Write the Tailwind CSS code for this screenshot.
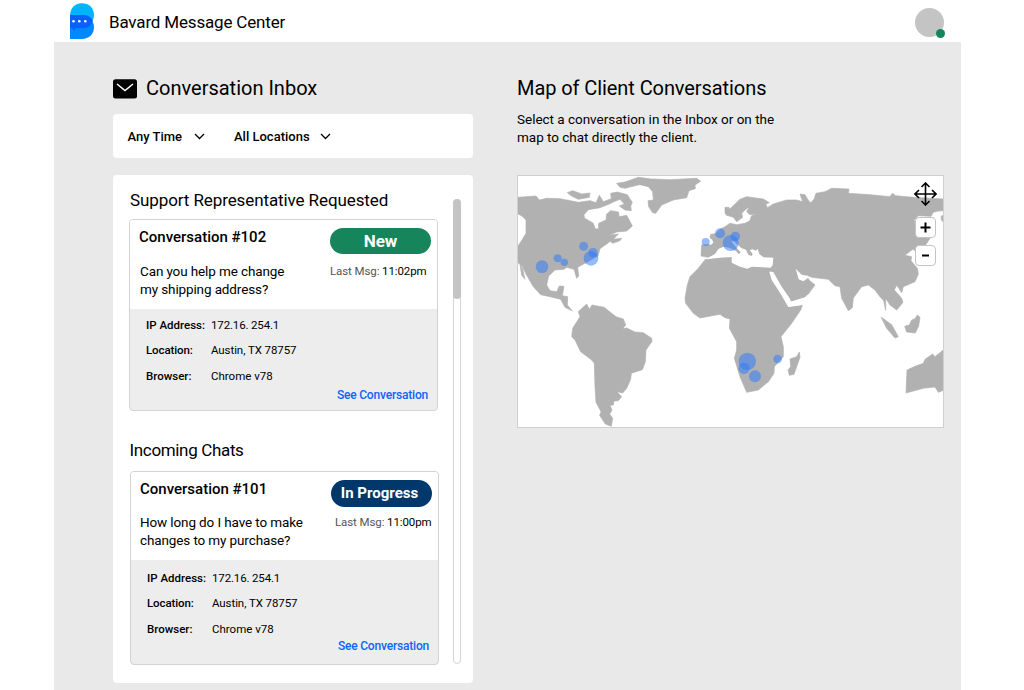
<!DOCTYPE html>
<html lang="en">
<head>
<meta charset="utf-8">
<title>Bavard Message Center</title>
<script src="https://cdn.jsdelivr.net/npm/@tailwindcss/browser@4"></script>
</head>
<body class="bg-white font-['Roboto',sans-serif] text-black h-[690px] w-[1024px] overflow-hidden">
<header class="h-[42px] flex pl-[70px]">
  <svg class="mt-[3px] w-6 h-9" viewBox="0 0 24 36">
    <path d="M0 13C0 5 5 .3 12 .3S24 5 24 12Q24 16 22 18.500L0 18.500Z" fill="#00b4ff"/>
    <path d="M0 18H22Q24 20 24 24.500C24 31 19 36 12 36H0Z" fill="#0088ff"/>
    <path d="M0 12H15Q20 12.500 23 18Q20 24.500 14 25H5V28L2 25H0Z" fill="#0a60ff"/>
    <circle cx="3.500" cy="18.300" r="1.300" fill="#fff"/><circle cx="9.300" cy="18.300" r="1.300" fill="#fff"/><circle cx="15.300" cy="18.300" r="1.300" fill="#fff"/>
  </svg>
  <h1 class="ml-[15px] mt-[11px] text-[17px] leading-[22px] tracking-[-0.17px] whitespace-nowrap">Bavard Message Center</h1>
  <div class="relative ml-auto mr-[80.500px] mt-2 size-[28.500px] rounded-full bg-[#c4c4c4]">
    <span class="absolute left-[20.500px] top-[20.500px] size-[9px] rounded-full bg-[#17855b]"></span>
  </div>
</header>
<main class="ml-[54px] w-[907px] h-[648px] bg-[#e9e9e9] flex pl-[59px]">
  <section class="w-[360px] pt-[33px]">
    <div class="flex h-[26px]">
      <svg class="mt-1 w-[24px] h-[20px]" viewBox="0 0 24 20"><rect y=".3" width="24" height="19.200" rx="2.500"/><path d="M4 5L12 11.500L20 5" fill="none" stroke="#fff" stroke-width="1.500"/></svg>
      <h2 class="ml-[9px] text-[20px] leading-[26px] whitespace-nowrap">Conversation Inbox</h2>
    </div>
    <div class="mt-[13px] h-[44px] rounded bg-white flex items-center pl-[14.500px] pt-px text-[13px] font-medium">
      <span class="w-[56px] whitespace-nowrap">Any Time</span>
      <svg class="ml-[10px] w-[11px] h-[7px]" viewBox="0 0 11 7"><path d="M1 1L5.500 5.500L10 1" fill="none" stroke="#000" stroke-width="1.300"/></svg>
      <span class="ml-[29.500px] w-[77px] whitespace-nowrap">All Locations</span>
      <svg class="ml-[9px] w-[11px] h-[7px]" viewBox="0 0 11 7"><path d="M1 1L5.500 5.500L10 1" fill="none" stroke="#000" stroke-width="1.300"/></svg>
    </div>
    <div class="mt-[17px] h-[508px] rounded bg-white flex pl-[16px]">
      <div class="w-[310px] pt-[14px]">
        <h3 class="text-[17px] leading-[22px] tracking-[-0.1px] pl-px whitespace-nowrap">Support Representative Requested</h3>
        <article class="mt-[8px] w-[309px] h-[192px] rounded border border-[#d3d3d3] bg-[#ededed] overflow-hidden">
          <div class="h-[89px] bg-white flex">
            <div class="w-[200px] pl-[9px] pt-[7px]">
              <h4 class="text-[15px] leading-5 font-medium whitespace-nowrap">Conversation #102</h4>
              <p class="mt-[15px] pl-px text-[13.500px] leading-[18px] tracking-[-0.12px] whitespace-nowrap">Can you help me change<br>my shipping address?</p>
            </div>
            <div class="pt-[8px]">
              <div class="w-[101px] h-[26px] rounded-full bg-[#17855b] text-white text-center text-[17px] leading-[26px] font-bold">New</div>
              <p class="mt-[9px] text-[11.500px] leading-4 tracking-[-0.1px] whitespace-nowrap"><span class="text-[#555]">Last Msg:</span> 11:02pm</p>
            </div>
          </div>
          <dl class="pl-4 pt-[8px] grid grid-cols-[65px_1fr] auto-rows-[25.300px] text-[11.500px] leading-4 whitespace-nowrap">
            <dt class="font-medium">IP Address:</dt><dd class="tracking-[-0.15px]">172.16. 254.1</dd>
            <dt class="font-medium tracking-[-0.1px]">Location:</dt><dd class="tracking-[-0.08px]">Austin, TX 78757</dd>
            <dt class="font-medium">Browser:</dt><dd>Chrome v78</dd>
          </dl>
          <a class="block -mt-[6px] text-right pr-[9px] text-[12px] leading-4 tracking-[-0.19px] font-medium text-[#0a66ff]">See Conversation</a>
        </article>
        <h3 class="mt-[28px] pl-[.5px] text-[17px] leading-[22px] tracking-[-0.34px] whitespace-nowrap">Incoming Chats</h3>
        <article class="mt-[10px] ml-px w-[309px] h-[194px] rounded border border-[#d3d3d3] bg-[#ededed] overflow-hidden">
          <div class="h-[88px] bg-white flex">
            <div class="w-[200px] pl-[9px] pt-[7px]">
              <h4 class="text-[15px] leading-5 font-medium whitespace-nowrap">Conversation #101</h4>
              <p class="mt-[14px] text-[13.500px] leading-[18px] tracking-[-0.12px] whitespace-nowrap">How long do I have to make<br>changes to my purchase?</p>
            </div>
            <div class="pt-[8px]">
              <div class="w-[101px] h-[27px] rounded-full bg-[#00386b] text-white text-center text-[15px] leading-[27px] pr-1 font-bold">In Progress</div>
              <p class="mt-[7px] pl-1 text-[11.500px] leading-4 tracking-[-0.1px] whitespace-nowrap"><span class="text-[#555]">Last Msg:</span> 11:00pm</p>
            </div>
          </div>
          <dl class="pl-4 pt-[10px] grid grid-cols-[65px_1fr] auto-rows-[25.300px] text-[11.500px] leading-4 whitespace-nowrap">
            <dt class="font-medium">IP Address:</dt><dd class="tracking-[-0.15px]">172.16. 254.1</dd>
            <dt class="font-medium tracking-[-0.1px]">Location:</dt><dd class="tracking-[-0.08px]">Austin, TX 78757</dd>
            <dt class="font-medium">Browser:</dt><dd>Chrome v78</dd>
          </dl>
          <a class="block -mt-[8px] text-right pr-[9px] text-[12px] leading-4 tracking-[-0.19px] font-medium text-[#0a66ff]">See Conversation</a>
        </article>
      </div>
      <div class="ml-[14px] mt-[24px] w-2 h-[465px] rounded-full border border-[#d3d3d3] bg-white"><div class="-mx-px -mt-px h-[100px] rounded-full bg-[#c4c4c4]"></div></div>
    </div>
  </section>
  <section class="ml-[44px] w-[427px] pt-[33px]">
    <h2 class="text-[20px] leading-[26px] tracking-[-0.08px] whitespace-nowrap">Map of Client Conversations</h2>
    <p class="mt-[9px] text-[13.500px] leading-[18px] tracking-[-0.02px] whitespace-nowrap">Select a conversation in the Inbox or on the<br>map to chat directly the client.</p>
    <div class="relative mt-[29px] h-[253px] w-[427px] border border-[#cfcfcf] bg-white">
      <svg class="block w-[425px] h-[251px]" viewBox="24 18 1275 753">
        <g fill="#b1b1b1" stroke="#b1b1b1" stroke-width="2" stroke-linejoin="round">
          <path d="M24 82L78 78L88 90L110 85L150 86L205 97L240 92L258 98L268 76L280 95L304 86L302 70L322 66L352 74L358 84L367 97L362 108L364 122L345 120L328 108L343 102L330 88L310 96L298 102L270 113L235 119L222 134L223 144L250 160L256 177L266 176L266 160L288 150L290 132L302 122L325 126L328 140L350 136L367 168L350 183L320 186L298 196L325 192L310 208L335 205L330 212L308 220L301 214L290 222L270 236L264 258L228 278L203 292L206 318L200 325L192 298L170 292L162 298L135 300L116 318L110 345L120 362L140 365L148 348L162 349L157 377L173 380L172 405L187 423L165 412L152 388L120 380L92 374L70 350L50 316L36 288L24 278V228L36 210L48 190V150L36 138L24 132Z"/>
          <path d="M172 68L188 62L215 72L240 69L238 82L205 88L185 78ZM30 283L38 298L45 328L35 315ZM320 40L345 36L385 22L430 28L418 38L380 46L345 55L330 52ZM390 44L415 38L430 27L480 29L560 25L572 34L555 45L556 56L537 62L530 83L490 90L455 105L437 130L428 128L416 110L414 92L430 90L428 65L415 50Z"/>
          <path d="M205 425L230 402L238 418L246 405L282 412L318 440L340 447L347 465L338 476L350 474L375 486L400 488L425 505L426 514L408 540L406 575L397 599L364 610L362 628L350 655L338 669L320 665L335 680L325 692L312 693L310 705L300 706L306 720L299 732L308 745L304 769L286 762L269 736L273 725L258 697L255 650L253 580L245 570L212 545L195 510L185 500L188 475L210 440Z"/>
          <path d="M585 269L620 262L662 260L715 282L790 290L779 303L800 335L820 370L835 411L855 409L877 406L872 420L845 460L813 500L820 530L820 560L793 590L792 610L775 635L745 660L710 667L690 620L673 565L680 540L680 515L658 475L660 447L645 443L630 433L590 440L570 444L550 430L527 400L525 385L532 345L540 320L565 295Z"/>
          <path d="M573 258L575 225L600 223L608 215L600 202L602 193L617 191L630 178L645 170L660 160L680 164L705 160L720 152L724 138L737 132L720 134L710 125L718 110L705 120L695 130L698 142L680 155L670 142L648 135L647 125L665 112L690 88L710 80L760 87L778 98L768 102L772 113L790 102L830 90L860 90L878 95L870 72L885 74L893 88L902 98L912 88L918 70L945 65L965 55L1017 57L1015 70L1080 74L1140 80L1147 70L1157 77L1210 82L1302 87V122L1285 123L1270 127L1263 139L1225 137L1213 150L1215 165L1260 190L1260 205L1245 228L1218 243L1208 238L1185 256L1205 260L1203 272L1222 295L1225 312L1215 335L1180 350L1175 368L1160 345L1153 360L1175 385L1179 397L1160 420L1140 405L1127 385L1127 421L1121 392L1108 378L1095 360L1075 345L1055 350L1030 384L1027 413L1015 422L995 385L990 350L975 347L955 328L905 322L890 316L897 330L915 345L895 372L840 395L834 384L815 350L785 305L700 265L640 240L610 255L595 262Z"/>
          <path d="M788 298L800 270L845 270L850 350L815 352ZM645 130L657 130V112L645 112ZM840 567L860 560L868 546L870 562L860 590L852 613L838 616L834 600L842 590ZM1113 441L1145 464L1165 500L1155 504L1130 475ZM1184 469L1198 465L1205 450L1215 446L1222 435L1230 442L1226 468L1216 489L1190 486ZM1188 669L1191 600L1215 589L1240 580L1245 568L1268 552L1275 560L1302 538V660L1285 667L1275 651L1240 655ZM1294 138L1302 135V158L1294 150Z"/>
        </g>
        <g fill="#fff">
          <path d="M588 268L615 252L625 237L640 230L658 233L678 243L686 253L692 247L682 236L665 216L670 212L695 235L708 239L715 254L725 258L728 252L719 240L728 238L738 242L743 236L748 252L760 262L790 263L788 285L782 293L725 290L712 296L690 290L665 278L665 261L630 263Z"/>
          <path d="M778 305L790 306L815 350L840 386L842 394L870 390L875 405L835 411L808 365L785 330Z"/>
          <path d="M857 296L875 314L892 317L897 322L880 334L866 328ZM595 208L606 208L610 218L603 224L597 224L603 215ZM893 74L896 74L906 90L900 95Z"/>
        </g>
        <path d="M842 390L900 366L885 382L845 394Z" fill="#b1b1b1"/>
        <g fill="#2878ff" fill-opacity=".5">
          <circle cx="96" cy="290" r="19"/><circle cx="143" cy="265" r="12"/><circle cx="163" cy="277" r="11"/><circle cx="221" cy="229" r="13.500"/><circle cx="249" cy="248" r="14"/><circle cx="243" cy="265" r="22"/>
          <circle cx="587" cy="216" r="12"/><circle cx="630" cy="190" r="15"/><circle cx="662" cy="219" r="24"/><circle cx="676" cy="199" r="14"/>
          <circle cx="712" cy="574" r="26"/><circle cx="702" cy="595" r="17"/><circle cx="735" cy="619" r="18"/><circle cx="803" cy="567" r="13"/>
        </g>
      </svg>
      <div class="absolute right-[6px] top-[6px] w-[23px] flex flex-col items-center">
        <svg class="w-[23px] h-[24px]" viewBox="0 0 23 24" fill="none" stroke="#000" stroke-width="1.600"><path d="M11.500 1V23M1 12H22M7.500 5L11.500 1L15.500 5M7.500 19L11.500 23L15.500 19M5 8L1 12L5 16M18 8L22 12L18 16"/></svg>
        <button class="mt-[11px] size-[21px] rounded-sm border border-[#c4c4c4] bg-white flex items-center justify-center"><svg class="size-[11px]" viewBox="0 0 11 11"><path d="M5.500 .5V10.500M.5 5.500H10.500" stroke="#000" stroke-width="2"/></svg></button>
        <button class="mt-[7px] size-[21px] rounded-sm border border-[#c4c4c4] bg-white flex items-center justify-center"><svg class="size-[7px]" viewBox="0 0 7 7"><path d="M0 3.500H7" stroke="#000" stroke-width="2"/></svg></button>
      </div>
    </div>
  </section>
</main>
</body>
</html>
